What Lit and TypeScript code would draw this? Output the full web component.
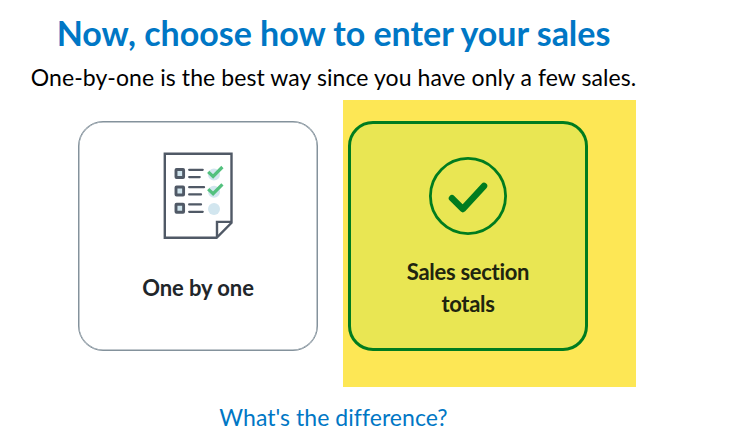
import { LitElement, html, css } from "lit";
import { customElement } from "lit/decorators.js";

@customElement("app-root")
export class AppRoot extends LitElement {
  static styles = css`
    :host {
      display: block;
      width: 743px;
      height: 446px;
      overflow: hidden;
      background: #fff;
      font-family: Lato, "Open Sans", sans-serif;
      font-variant-ligatures: none;
    }
    .page {
      width: 667px;
      display: flex;
      flex-direction: column;
      align-items: center;
      white-space: nowrap;
    }
    h1 {
      margin: 13px 0 0;
      font-size: 34px;
      line-height: 40px;
      font-weight: 700;
      color: #0077c5;
      letter-spacing: -0.02px;
    }
    .lead {
      margin: 9px 0 0;
      font-size: 23px;
      line-height: 30px;
      color: #000;
      letter-spacing: 0.08px;
    }
    .choices {
      display: flex;
      gap: 30px;
      margin: 29px 1px 0 0;
    }
    .slot {
      position: relative;
      display: flex;
    }
    .marker {
      position: absolute;
      left: -5px;
      top: -21px;
      width: 293px;
      height: 287px;
      background: #fde755;
    }
    .card {
      position: relative;
      box-sizing: border-box;
      width: 240px;
      height: 230px;
      border-radius: 25px;
      display: flex;
      flex-direction: column;
      align-items: center;
      border: 1px solid #84929c;
      box-shadow: inset 0 0 0 0.5px #84929c;
      background: #fff;
      padding-top: 30px;
      font-size: 22px;
      line-height: 32px;
      font-weight: 700;
      color: #21262a;
      text-align: center;
      letter-spacing: -0.08px;
    }
    .card.selected {
      border: 3px solid #007c1f;
      box-shadow: none;
      background: #e9e653;
      padding-top: 32px;
      color: #20240f;
      letter-spacing: -0.3px;
    }
    .card svg {
      display: block;
      flex: none;
    }
    .one {
      margin-top: 32px;
    }
    .totals {
      margin-top: 20px;
    }
    .link {
      margin-top: 51px;
      font-size: 23px;
      line-height: 30px;
      color: #0077c5;
      text-decoration: none;
      letter-spacing: 0.05px;
    }
  `;

  render() {
    return html`
      <main class="page">
        <h1>Now, choose how to enter your sales</h1>
        <p class="lead">One-by-one is the best way since you have only a few sales.</p>
        <div class="choices">
          <div class="slot">
            <div class="card">
              <svg width="72" height="88" viewBox="0 0 72 88" fill="none">
                <path d="M2.8 1.7H69.5V70.8L54.6 85.8H2.8Z" stroke="#505966" stroke-width="2.4" />
                <path d="M55 85V69.9H69.5" stroke="#505966" stroke-width="2.4" />
                <g fill="#cfe4ed" stroke="#505966" stroke-width="2.9">
                  <rect x="14" y="17.5" width="7.6" height="8" rx=".5" />
                  <rect x="14" y="35" width="7.6" height="8" rx=".5" />
                  <rect x="14" y="52.3" width="7.6" height="8" rx=".5" />
                </g>
                <path d="M27.2 17.8H40.7M27.2 25.1H37.7M27.2 35.2H42M27.2 42.4H39M27.2 52.4H39M27.2 59.8H40.7" stroke="#505966" stroke-width="2.3" stroke-linecap="round" />
                <g fill="#d2e6ef">
                  <circle cx="52" cy="22.4" r="6" />
                  <circle cx="52" cy="39.7" r="6" />
                  <circle cx="52" cy="57" r="6" />
                </g>
                <path d="M46.2 19.8L51.1 24.4L60.4 15M46.2 37.1L51.1 41.7L60.4 32.3" stroke="#53c17e" stroke-width="3.2" />
              </svg>
              <div class="one">One by one</div>
            </div>
          </div>
          <div class="slot">
            <div class="marker"></div>
            <div class="card selected">
              <svg width="80" height="80" viewBox="0 0 80 80" fill="none" stroke="#007c1f">
                <circle cx="40" cy="40" r="37.6" stroke-width="2.8" />
                <path d="M24 42.3L34.8 53L56 30" stroke-width="6.5" stroke-linecap="round" stroke-linejoin="round" />
              </svg>
              <div class="totals">Sales section<br />totals</div>
            </div>
          </div>
        </div>
        <a class="link">What's the difference?</a>
      </main>
    `;
  }
}
